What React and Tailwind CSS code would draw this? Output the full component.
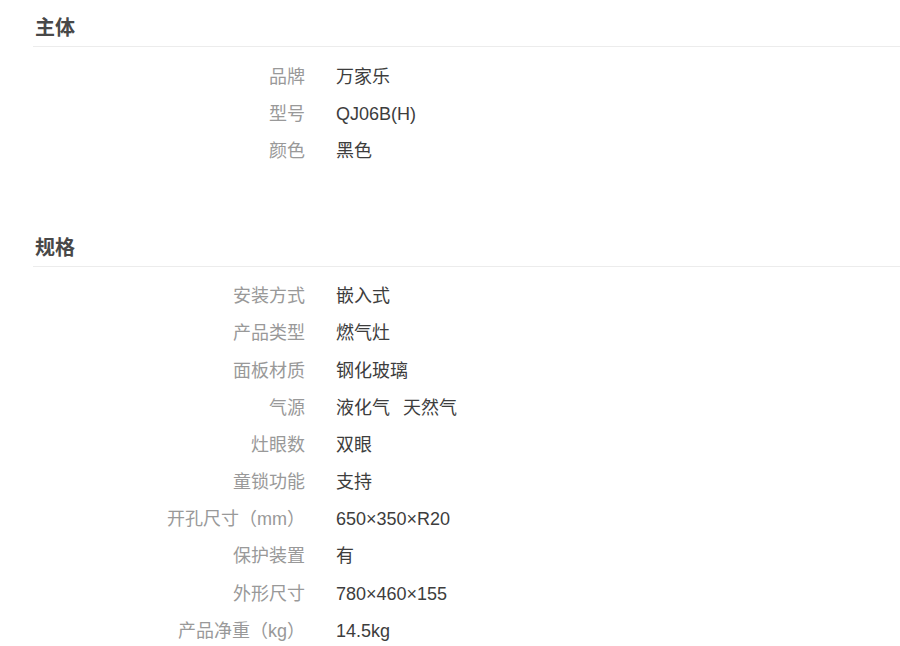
const sections = [
  {
    title: '主体',
    rows: [
      ['品牌', '万家乐'],
      ['型号', 'QJ06B(H)'],
      ['颜色', '黑色'],
    ],
  },
  {
    title: '规格',
    rows: [
      ['安装方式', '嵌入式'],
      ['产品类型', '燃气灶'],
      ['面板材质', '钢化玻璃'],
      ['气源', ['液化气', '天然气']],
      ['灶眼数', '双眼'],
      ['童锁功能', '支持'],
      ['开孔尺寸（mm）', '650×350×R20'],
      ['保护装置', '有'],
      ['外形尺寸', '780×460×155'],
      ['产品净重（kg）', '14.5kg'],
    ],
  },
];

const Row = ({ label, value }) => (
  <div className="flex h-[37.2px] items-center">
    <div className="w-[272px] shrink-0 text-right text-[#999]">{label}</div>
    <div className="ml-[31px] text-[#3d3d3d]">
      {Array.isArray(value)
        ? value.map((v, i) => (
            <span key={v} className={i > 0 ? 'ml-[13px]' : ''}>
              {v}
            </span>
          ))
        : value}
    </div>
  </div>
);

const App = () => {
  return (
    <div
      className="min-h-screen bg-white pl-[33px] pt-[14px] text-[18px] leading-[24px]"
      style={{ fontFamily: '"Liberation Sans", "Noto Sans CJK SC", sans-serif' }}
    >
      {sections.map((section, i) => (
        <div key={section.title} className={i > 0 ? 'mt-[64px]' : ''}>
          <h2 className="border-b border-[#ececec] pb-[4px] pl-[2px] text-[20px] font-bold leading-[28px] text-[#484848]">
            {section.title}
          </h2>
          <div className="mt-[11px]">
            {section.rows.map(([label, value]) => (
              <Row key={label} label={label} value={value} />
            ))}
          </div>
        </div>
      ))}
    </div>
  );
};

export default App;
